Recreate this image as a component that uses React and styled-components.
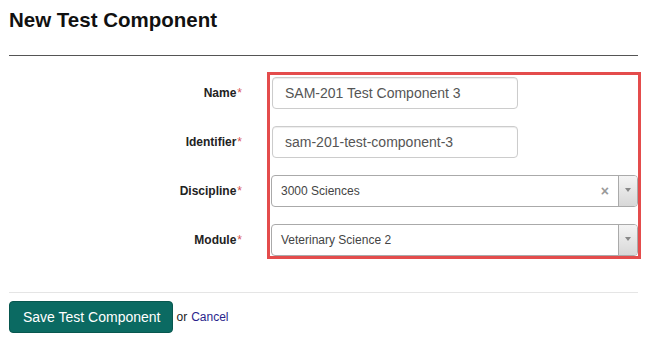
import React from "react";
import styled, { createGlobalStyle } from "styled-components";

const GlobalStyle = createGlobalStyle`
  body {
    margin: 0;
    background: #fff;
    font-family: "Liberation Sans", Arial, sans-serif;
    color: #333;
  }
`;

const Page = styled.div`
  width: 629px;
  padding: 0 10px 0 9px;
`;

const Title = styled.h1`
  margin: 8px 0 0;
  font-size: 20.5px;
  line-height: 23px;
  font-weight: bold;
  color: #111;
`;

const Rule = styled.hr`
  margin: 24px 0 0;
  border: 0;
  border-top: 1px solid #555;
`;

const FormGrid = styled.div`
  display: grid;
  grid-template-columns: 233px 1fr;
  grid-template-rows: repeat(4, 32px);
  column-gap: 30px;
  row-gap: 17px;
  margin-top: 21px;
`;

const Label = styled.label`
  grid-column: 1;
  grid-row: ${(p) => p.$row};
  align-self: center;
  text-align: right;
  font-size: 12px;
  font-weight: bold;
  color: #222;
`;

const Required = styled.span`
  color: #d9534f;
  font-weight: normal;
  margin-left: 1px;
`;

const Highlight = styled.div`
  grid-column: 2;
  grid-row: 1 / span 4;
  margin: -5px -3px -3px -5px;
  border: 3px solid #e44c4c;
  pointer-events: none;
`;

const TextInput = styled.input`
  grid-column: 2;
  grid-row: ${(p) => p.$row};
  width: 246px;
  height: 32px;
  box-sizing: border-box;
  padding: 0 12px;
  border: 1px solid #ccc;
  border-radius: 4px;
  box-shadow: inset 0 1px 1px rgba(0, 0, 0, 0.075);
  font-family: "Liberation Sans", Arial, sans-serif;
  font-size: 14px;
  color: #555;
  outline: none;
`;

const SelectBox = styled.div`
  grid-column: 2;
  grid-row: ${(p) => p.$row};
  display: flex;
  align-items: stretch;
  height: 32px;
  box-sizing: border-box;
  margin-left: -1px;
  border: 1px solid #aaa;
  border-radius: 4px;
  background: #fff;
  overflow: hidden;
`;

const SelectValue = styled.span`
  flex: 1;
  display: flex;
  align-items: center;
  padding-left: 9px;
  font-size: 12px;
  color: #444;
`;

const Clear = styled.span`
  display: flex;
  align-items: center;
  padding-right: 9px;
  font-size: 14px;
  font-weight: bold;
  color: #999;
`;

const Arrow = styled.span`
  width: 18px;
  display: flex;
  align-items: center;
  justify-content: center;
  border-left: 1px solid #aaa;
  background: linear-gradient(#f4f4f4, #d8d8d8);

  &::after {
    content: "";
    border-left: 3px solid transparent;
    border-right: 3px solid transparent;
    border-top: 4px solid #888;
    margin-top: -2px;
  }
`;

const FooterRule = styled.hr`
  margin: 36px 0 0;
  border: 0;
  border-top: 1px solid #e5e5e5;
`;

const Actions = styled.div`
  display: flex;
  align-items: center;
  margin-top: 8px;
  font-size: 12px;
  color: #222;
`;

const SaveButton = styled.button`
  height: 32px;
  padding: 0 11px 0 13px;
  border: 1px solid #08574f;
  border-radius: 4px;
  background: #0b6a62;
  color: #fff;
  font-family: "Liberation Sans", Arial, sans-serif;
  font-size: 14px;
  margin-right: 4px;
`;

const CancelLink = styled.a`
  color: #2a1f8c;
  text-decoration: none;
  margin-left: 4px;
`;

function Select({ value, clearable, row }) {
  return (
    <SelectBox $row={row}>
      <SelectValue>{value}</SelectValue>
      {clearable && <Clear>×</Clear>}
      <Arrow />
    </SelectBox>
  );
}

export default function App() {
  return (
    <Page>
      <GlobalStyle />
      <Title>New Test Component</Title>
      <Rule />
      <FormGrid>
        <Label $row={1}>
          Name<Required>*</Required>
        </Label>
        <TextInput $row={1} defaultValue="SAM-201 Test Component 3" />
        <Label $row={2}>
          Identifier<Required>*</Required>
        </Label>
        <TextInput $row={2} defaultValue="sam-201-test-component-3" />
        <Label $row={3}>
          Discipline<Required>*</Required>
        </Label>
        <Select row={3} value="3000 Sciences" clearable />
        <Label $row={4}>
          Module<Required>*</Required>
        </Label>
        <Select row={4} value="Veterinary Science 2" />
        <Highlight />
      </FormGrid>
      <FooterRule />
      <Actions>
        <SaveButton>Save Test Component</SaveButton>
        or
        <CancelLink href="#">Cancel</CancelLink>
      </Actions>
    </Page>
  );
}
